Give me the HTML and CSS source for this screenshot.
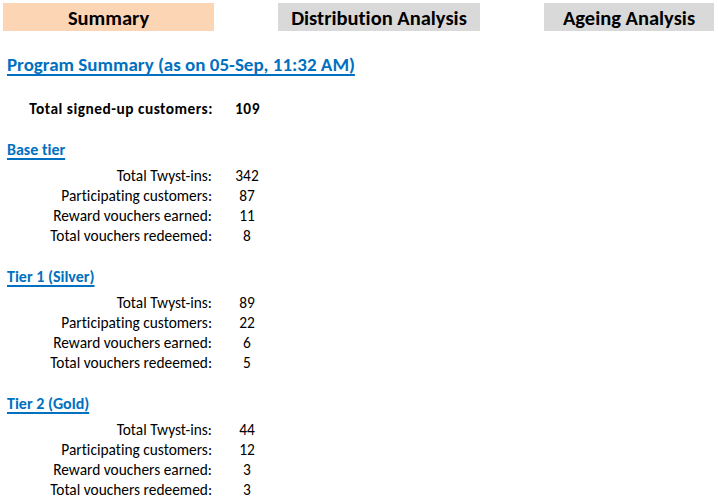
FILE: index.html
```html
<!DOCTYPE html>
<html>
<head>
<meta charset="utf-8">
<link rel="stylesheet" href="styles.css">
</head>
<body>
<div class="sheet">
  <nav class="tabs">
    <div class="tab tab-summary">Summary</div>
    <div class="tab tab-dist">Distribution Analysis</div>
    <div class="tab tab-age">Ageing Analysis</div>
  </nav>

  <h1 class="title"><span>Program Summary (as on 05-Sep, 11:32 AM)</span></h1>

  <div class="row total">
    <span class="label">Total signed-up customers:</span>
    <span class="value">109</span>
  </div>

  <section class="tier">
    <h2 class="tier-name"><span>Base tier</span></h2>
    <div class="row"><span class="label">Total Twyst-ins:</span><span class="value">342</span></div>
    <div class="row"><span class="label">Participating customers:</span><span class="value">87</span></div>
    <div class="row"><span class="label">Reward vouchers earned:</span><span class="value">11</span></div>
    <div class="row"><span class="label">Total vouchers redeemed:</span><span class="value">8</span></div>
  </section>

  <section class="tier">
    <h2 class="tier-name"><span>Tier 1 (Silver)</span></h2>
    <div class="row"><span class="label">Total Twyst-ins:</span><span class="value">89</span></div>
    <div class="row"><span class="label">Participating customers:</span><span class="value">22</span></div>
    <div class="row"><span class="label">Reward vouchers earned:</span><span class="value">6</span></div>
    <div class="row"><span class="label">Total vouchers redeemed:</span><span class="value">5</span></div>
  </section>

  <section class="tier">
    <h2 class="tier-name"><span>Tier 2 (Gold)</span></h2>
    <div class="row"><span class="label">Total Twyst-ins:</span><span class="value">44</span></div>
    <div class="row"><span class="label">Participating customers:</span><span class="value">12</span></div>
    <div class="row"><span class="label">Reward vouchers earned:</span><span class="value">3</span></div>
    <div class="row"><span class="label">Total vouchers redeemed:</span><span class="value">3</span></div>
  </section>
</div>
</body>
</html>
```

FILE: styles.css
```css
html, body {
  margin: 0;
  padding: 0;
  background: #ffffff;
}

.sheet {
  font-family: "Carlito", "Calibri", "Lato", sans-serif;
  font-size: 15.4px;
  font-variant-ligatures: none;
  color: #000000;
  padding-top: 3px;
}

.tabs {
  display: flex;
  height: 28px;
}

.tab {
  display: flex;
  align-items: center;
  justify-content: center;
  padding-top: 2px;
  box-sizing: border-box;
  font-weight: bold;
  font-size: 20.5px;
  color: #000;
}

.tab-summary {
  margin-left: 3px;
  width: 211px;
  background: #fcd5b4;
}

.tab-dist {
  margin-left: 64px;
  width: 202px;
  background: #d9d9d9;
}

.tab-age {
  margin-left: 64px;
  width: 170px;
  background: #d9d9d9;
}

.title {
  margin: 24px 0 0 7px;
  height: 20px;
  line-height: 20px;
  font-size: 19px;
  font-weight: bold;
  color: #0070c0;
}

.title span,
.tier-name span {
  text-decoration: underline;
  text-decoration-thickness: 1.5px;
  text-underline-offset: 3px;
}

.row {
  display: flex;
  height: 20px;
  line-height: 22px;
}

.label {
  width: 212px;
  text-align: right;
}

.value {
  width: 70px;
  text-align: center;
}

.total {
  margin-top: 23px;
  font-weight: bold;
  letter-spacing: 0.5px;
}

.total .label {
  width: 213px;
}

.total .value {
  width: 69px;
}

.tier {
  margin-top: 21px;
}

.tier-name {
  margin: 0 0 6px 7px;
  height: 20px;
  line-height: 21px;
  font-size: 16px;
  font-weight: bold;
  color: #0070c0;
}
```
